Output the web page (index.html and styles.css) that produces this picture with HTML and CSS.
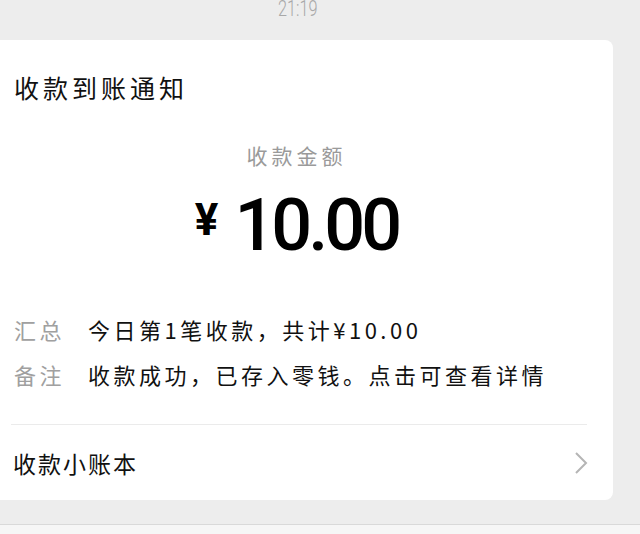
FILE: index.html
```html
<!DOCTYPE html>
<html lang="zh">
<head>
<meta charset="utf-8">
<link rel="stylesheet" href="styles.css">
</head>
<body>
<div class="page">
  <div class="time"><span class="time-text">21:19</span></div>
  <div class="card">
    <div class="title">收款到账通知</div>
    <div class="amount-label">收款金额</div>
    <div class="amount"><span class="yen">¥</span><span class="num">10.00</span></div>
    <div class="rows">
      <div class="row"><span class="key">汇总</span><span class="val">今日第1笔收款，共计¥10.00</span></div>
      <div class="row"><span class="key">备注</span><span class="val">收款成功，已存入零钱。点击可查看详情</span></div>
    </div>
    <div class="divider"></div>
    <div class="footer">
      <span class="footer-text">收款小账本</span>
      <svg class="chev" width="14" height="24" viewBox="0 0 14 24"><path d="M2 2 L12 12 L2 22" fill="none" stroke="#b5b5b5" stroke-width="2"/></svg>
    </div>
  </div>
  <div class="bottombar"></div>
</div>
</body>
</html>
```
FILE: styles.css
```css
html, body {
  margin: 0;
  padding: 0;
  background: #ededed;
}
.page {
  width: 640px;
  height: 534px;
  overflow: hidden;
  font-family: "Noto Sans CJK SC", "Noto Sans", sans-serif;
  color: #111;
}
.time {
  height: 40px;
  text-align: center;
  font-family: "Roboto", sans-serif;
  font-weight: 300;
  font-size: 22px;
  line-height: 18px;
  color: #a8a8a8;
  padding-right: 44px;
}
.time-text {
  display: inline-block;
  transform: scaleX(0.74);
}
.card {
  margin-left: -20px;
  width: 633px;
  height: 460px;
  background: #fff;
  border-radius: 8px;
  box-sizing: border-box;
  padding-top: 30px;
  display: flex;
  flex-direction: column;
}
.title {
  padding-left: 34px;
  font-size: 25px;
  line-height: 34px;
  letter-spacing: 4px;
  color: #111;
}
.amount-label {
  margin-top: 34px;
  text-align: center;
  font-size: 21px;
  line-height: 34px;
  letter-spacing: 4px;
  color: #9a9a9a;
}
.amount {
  margin-top: 14px;
  height: 80px;
  display: flex;
  justify-content: center;
  align-items: center;
  gap: 16px;
  font-family: "Roboto", sans-serif;
  color: #000;
}
.yen {
  font-size: 44px;
  font-weight: 700;
  transform: translateY(-6px);
}
.num {
  font-size: 72px;
  font-weight: 500;
  letter-spacing: -4px;
  line-height: 80px;
}
.rows {
  margin-top: 40px;
  padding-left: 34px;
}
.row {
  display: flex;
  height: 45px;
  align-items: center;
  font-size: 22px;
  letter-spacing: 3.5px;
}
.key {
  width: 74px;
  flex: none;
  color: #a0a0a0;
}
.val {
  color: #111;
}
.divider {
  margin-top: 28px;
  margin-left: 31px;
  margin-right: 26px;
  height: 1px;
  background: #ebebeb;
}
.footer {
  flex: 1;
  display: flex;
  align-items: center;
  justify-content: space-between;
  padding-left: 33px;
  padding-right: 25px;
}
.footer-text {
  font-size: 23px;
  letter-spacing: 2px;
  color: #111;
}
.chev {
  display: block;
}
.bottombar {
  margin-top: 24px;
  height: 20px;
  border-top: 1px solid #d9d9d9;
  background: #f6f6f6;
}
```
